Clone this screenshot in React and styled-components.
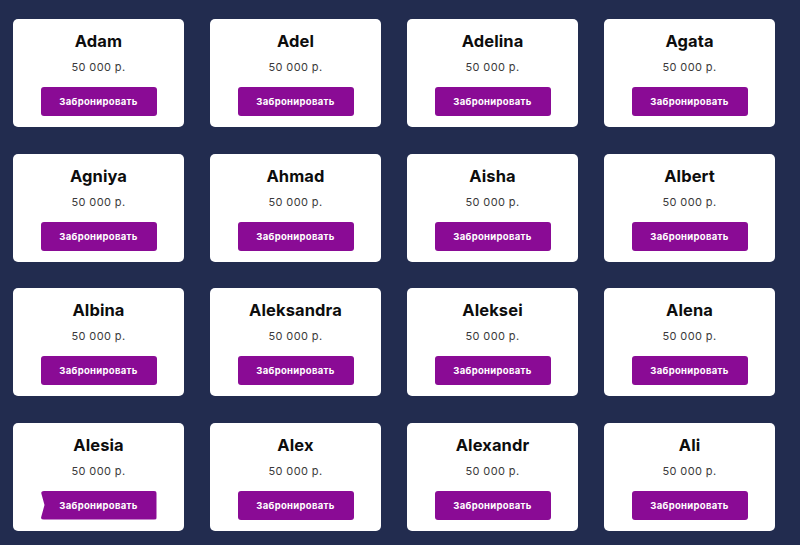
import React from "react";
import styled, { createGlobalStyle } from "styled-components";

const Global = createGlobalStyle`
  html, body { margin: 0; padding: 0; background: #222c4f; }
  body { font-family: Inter, "Noto Sans", sans-serif; }
`;

const Page = styled.div`
  width: 800px;
  height: 545px;
  box-sizing: border-box;
  padding: 19px 25px 0 13px;
  background: #222c4f;
  overflow: hidden;
`;

const Grid = styled.div`
  display: grid;
  grid-template-columns: repeat(4, 171px);
  column-gap: 26px;
  row-gap: 26.5px;
`;

const Card = styled.div`
  height: 108px;
  box-sizing: border-box;
  background: #ffffff;
  border-radius: 5px;
  display: flex;
  flex-direction: column;
  align-items: center;
  padding-top: 12px;
`;

const Name = styled.div`
  font-size: 16.5px;
  font-weight: 700;
  line-height: 20px;
  color: #0d0d0d;
  letter-spacing: 0.1px;
`;

const Price = styled.div`
  margin-top: 9px;
  font-size: 11px;
  line-height: 14px;
  font-weight: 400;
  color: #3a3a3a;
  letter-spacing: 0.4px;
`;

const Button = styled.button`
  margin-top: 13px;
  width: 116px;
  height: 29px;
  border: none;
  border-radius: 3px;
  background: #8a0b95;
  color: #ffffff;
  font-family: Inter, "Noto Sans", sans-serif;
  font-size: 9.5px;
  font-weight: 700;
  letter-spacing: 0.3px;
  padding: 0;
  cursor: pointer;
  clip-path: ${(p) =>
    p.$ribbon
      ? "polygon(0 0, 100% 0, 100% 100%, 0 100%, 4px 50%)"
      : "none"};
`;

const names = [
  "Adam", "Adel", "Adelina", "Agata",
  "Agniya", "Ahmad", "Aisha", "Albert",
  "Albina", "Aleksandra", "Aleksei", "Alena",
  "Alesia", "Alex", "Alexandr", "Ali",
];

export default function App() {
  return (
    <>
      <Global />
      <Page>
        <Grid>
          {names.map((n) => (
            <Card key={n}>
              <Name>{n}</Name>
              <Price>50 000 р.</Price>
              <Button $ribbon={n === "Alesia"}>Забронировать</Button>
            </Card>
          ))}
        </Grid>
      </Page>
    </>
  );
}
